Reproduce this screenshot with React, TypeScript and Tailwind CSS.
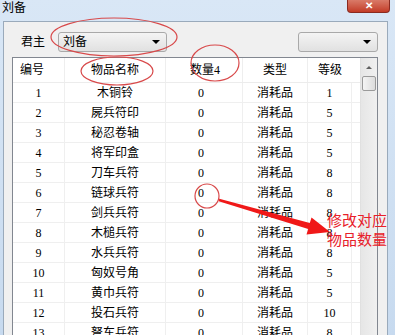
import React from 'react';

const rows: [number, string, number][] = [
  [1, '木铜铃', 1],
  [2, '屍兵符印', 5],
  [3, '秘忍卷轴', 5],
  [4, '将军印盒', 5],
  [5, '刀车兵符', 8],
  [6, '链球兵符', 8],
  [7, '剑兵兵符', 8],
  [8, '木槌兵符', 8],
  [9, '水兵兵符', 8],
  [10, '匈奴号角', 5],
  [11, '黄巾兵符', 5],
  [12, '投石兵符', 10],
  [13, '弩车兵符', 8],
];

const Combo = ({ text, className }: { text: string; className: string }) => (
  <div
    className={`h-[20px] flex items-center justify-between rounded-[3px] border border-[#a9a9a9] bg-gradient-to-b from-[#f4f4f4] to-[#e1e1e1] pl-[4px] pr-[6px] ${className}`}
  >
    <span>{text}</span>
    <span className="w-0 h-0 border-l-[4px] border-r-[4px] border-t-[4px] border-l-transparent border-r-transparent border-t-black" />
  </div>
);

const Annotations = () => (
  <svg className="absolute inset-0 pointer-events-none" width="395" height="335" viewBox="0 0 395 335">
    <ellipse cx="114" cy="37" rx="63" ry="19" fill="none" stroke="#d8494a" strokeWidth="1.2" />
    <ellipse cx="117" cy="71" rx="36" ry="14" fill="none" stroke="#d8494a" strokeWidth="1.2" />
    <ellipse cx="215" cy="63" rx="24" ry="18" fill="none" stroke="#d8494a" strokeWidth="1.2" />
    <ellipse cx="207" cy="196" rx="12" ry="12" fill="none" stroke="#d8494a" strokeWidth="1.2" />
    <polygon
      points="219.3,198.8 309.8,223.1 311.5,217.4 330,232 306.5,234.6 308.2,228.9 218.7,201.2"
      fill="#f01818"
    />
  </svg>
);

export default function App() {
  return (
    <div
      className="relative w-[395px] h-[335px] overflow-hidden bg-gradient-to-b from-[#d9e7f6] to-[#c7daef] text-[12px] text-black"
      style={{ fontFamily: '"Liberation Serif", "Noto Sans CJK SC", serif' }}
    >
      {/* title bar */}
      <div className="h-[21px] flex items-start">
        <span className="pl-[2px] pt-[1px] text-[12px] leading-[14px]">刘备</span>
        <div className="ml-auto mr-[5px] w-[43px] h-[13px] rounded-b-[4px] border border-t-0 border-[#8a2a20] bg-gradient-to-b from-[#d97a68] to-[#c23a26] flex items-center justify-center text-white font-bold text-[10px] leading-none">
          ✕
        </div>
      </div>

      {/* panel */}
      <div className="ml-[3px] w-[385px] h-[320px] border border-[#9aaabb] bg-[#f0f0f0]">
        <div className="flex items-center pt-[10px] pl-[17px]">
          <span className="w-[37px]">君主</span>
          <Combo text="刘备" className="w-[109px]" />
          <Combo text="" className="w-[80px] ml-auto mr-[9px]" />
        </div>

        {/* table */}
        <div className="ml-[8px] mt-[5px] w-[366px] h-[290px] flex border border-[#828790] bg-white">
          <div className="flex-1">
            <div className="h-[25px] flex items-center border-b border-[#ececec]">
              <div className="w-[52px] pl-[7px] border-r border-[#eeeeee] h-full flex items-center">编号</div>
              <div className="w-[101px] border-r border-[#eeeeee] h-full flex items-center justify-center">物品名称</div>
              <div className="w-[77px] border-r border-[#eeeeee] h-full flex items-center pl-[24px]">数量4</div>
              <div className="w-[65px] border-r border-[#eeeeee] h-full flex items-center justify-center">类型</div>
              <div className="w-[44px] h-full flex items-center justify-center">等级</div>
            </div>
            {rows.map(([id, name, lv]) => (
              <div key={id} className="h-[20px] flex items-center border-b border-[#efefef]">
                <div className="w-[52px] h-full border-r border-[#efefef] flex items-center justify-center">{id}</div>
                <div className="w-[101px] h-full border-r border-[#efefef] flex items-center justify-center">{name}</div>
                <div className="w-[77px] h-full border-r border-[#efefef] flex items-center pl-[32px]">0</div>
                <div className="w-[65px] h-full border-r border-[#efefef] flex items-center justify-center">消耗品</div>
                <div className="w-[44px] h-full border-r border-[#efefef] flex items-center justify-center">{lv}</div>
              </div>
            ))}
          </div>
          {/* scrollbar */}
          <div className="w-[17px] h-full bg-gradient-to-r from-[#e6e6e6] to-[#f0f0f0] border-l border-[#e0e0e0] flex flex-col items-center">
            <div className="h-[18px] flex items-center justify-center">
              <span className="w-0 h-0 border-l-[3px] border-r-[3px] border-b-[3px] border-l-transparent border-r-transparent border-b-[#606060]" />
            </div>
            <div className="w-[14px] h-[15px] rounded-[2px] border border-[#9a9a9a] bg-gradient-to-r from-[#f4f4f4] to-[#dcdcdc]" />
          </div>
        </div>
      </div>

      <Annotations />

      <div
        className="absolute left-[327px] top-[210px] text-[15px] leading-[19px] text-[#e8202a]"
        style={{ fontFamily: '"Noto Sans CJK SC", sans-serif' }}
      >
        <div>修改对应</div>
        <div>物品数量</div>
      </div>
    </div>
  );
}
